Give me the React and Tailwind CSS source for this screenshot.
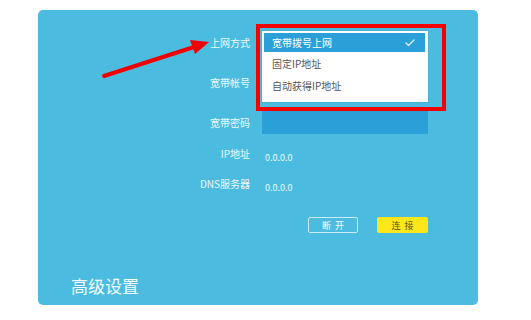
import React from 'react';
import { Check } from 'lucide-react';

const font = { fontFamily: '"Noto Sans CJK SC", "Liberation Sans", sans-serif' };

function Row({ label, children, className = '' }) {
  return (
    <div className={`flex items-center ${className}`}>
      <div className="w-[212px] text-right text-[10px] leading-none text-[#eef9fd]">{label}</div>
      <div className="ml-[12px] flex-1">{children}</div>
    </div>
  );
}

export default function App() {
  return (
    <div className="relative w-[531px] h-[320px] bg-white overflow-hidden" style={font}>
      <div className="relative ml-[38px] mt-[10px] w-[440px] h-[295px] rounded-[5px] bg-[#4bbce0] flex flex-col pt-[21px]">
        <Row label="上网方式" className="h-[23px]">
          <div className="w-[166px] h-[23px] bg-[#2a9fd8]" />
        </Row>
        <Row label="宽带帐号" className="h-[23px] mt-[17px]">
          <div className="w-[166px] h-[23px] bg-[#2a9fd8]" />
        </Row>
        <Row label="宽带密码" className="h-[23px] mt-[17px]">
          <div className="w-[166px] h-[23px] bg-[#2a9fd8]" />
        </Row>
        <Row label="IP地址" className="h-[20px] mt-[10px]">
          <span className="text-[9px] text-[#eef9fd] ml-[3px]">0.0.0.0</span>
        </Row>
        <Row label="DNS服务器" className="h-[20px] mt-[10px]">
          <span className="text-[9px] text-[#eef9fd] ml-[3px]">0.0.0.0</span>
        </Row>
        <div className="flex mt-[23px] ml-[270px] gap-[19px]">
          <button className="w-[50px] h-[16px] rounded-[2px] border border-[#c9ecf8] text-[9px] leading-none text-white tracking-[4px] pl-[4px]">断开</button>
          <button className="w-[51px] h-[16px] rounded-[2px] bg-[#fde619] text-[9px] leading-none text-[#5a5326] tracking-[4px] pl-[4px]">连接</button>
        </div>
        <div className="mt-auto mb-[11px] ml-[33px] text-[17px] leading-none text-[#f2fbfe]">高级设置</div>

        {/* dropdown menu */}
        <div className="absolute left-[218px] top-[14px] w-[190px] h-[87px] border-[4px] border-[#f40000]" />
        <div className="absolute left-[224px] top-[21px] w-[166px] h-[71px] bg-white pt-[2px] pl-[2px] pr-[3px] shadow-[0_0_1px_rgba(0,0,0,0.3)]">
          <div className="h-[19px] bg-[#2a9fd8] flex items-center pl-[8px] pr-[9px] text-[10px] text-white">
            <span className="flex-1">宽带拨号上网</span>
            <Check size={12} strokeWidth={2.5} className="text-[#dff3fb]" />
          </div>
          <div className="h-[22px] flex items-center pl-[8px] text-[10px] text-[#555]">固定IP地址</div>
          <div className="h-[22px] flex items-center pl-[8px] text-[10px] text-[#555]">自动获得IP地址</div>
        </div>
      </div>

      {/* annotation arrow */}
      <svg className="absolute left-0 top-0" width="531" height="320">
        <line x1="104" y1="76" x2="194" y2="47" stroke="#f20000" strokeWidth="4" strokeLinecap="round" />
        <polygon points="209,42 190,40 195,54" fill="#f20000" />
      </svg>
    </div>
  );
}
